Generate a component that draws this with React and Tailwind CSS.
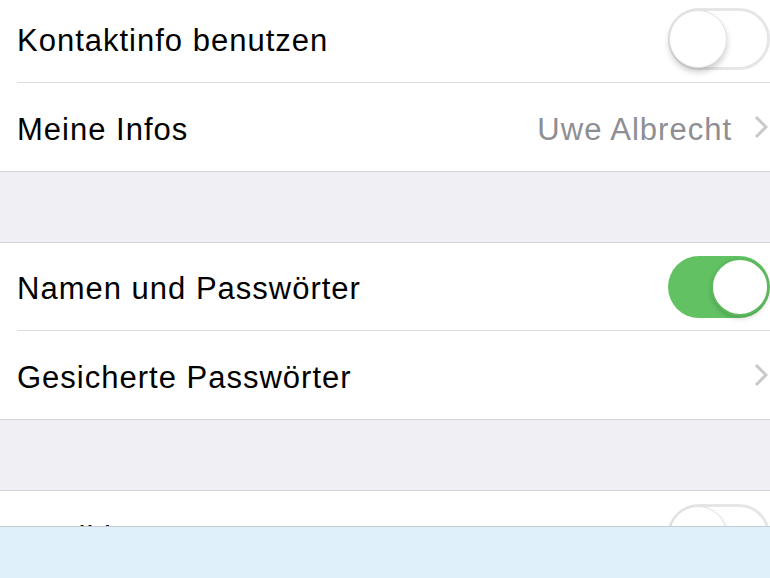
const Toggle = ({ on }) => {
  if (on) {
    return (
      <div className="relative h-[62px] w-[102px] shrink-0 rounded-full bg-[#62c162]">
        <div className="absolute right-[1px] top-[2px] h-[58px] w-[58px] rounded-full border-2 border-[#5cb95d] bg-white shadow-[0_3px_4px_rgba(0,0,0,0.15)]" />
      </div>
    );
  }
  return (
    <div className="relative h-[62px] w-[102px] shrink-0 rounded-full border-[3px] border-[#e6e6e9] bg-white">
      <div className="absolute left-[-2px] top-[-1px] h-[58px] w-[58px] rounded-full border border-[#e2e2e4] bg-white shadow-[0_4px_6px_rgba(0,0,0,0.2)]" />
    </div>
  );
};

const Chevron = () => (
  <svg width="14" height="24" viewBox="0 0 14 24" className="shrink-0">
    <path d="M2 2 L12 12 L2 22" fill="none" stroke="#c7c7cc" strokeWidth="3" />
  </svg>
);

const Row = ({ label, height, divider, children }) => (
  <div className={`flex pl-[17px] ${height} bg-white`}>
    <div
      className={`flex flex-1 items-center justify-between ${
        divider ? "border-b border-[#dcdcdf]" : ""
      }`}
    >
      <span className="pt-[6px] text-[31px] tracking-[1px] text-black">{label}</span>
      {children}
    </div>
  </div>
);

export default function App() {
  return (
    <div
      className="relative h-[578px] w-[770px] overflow-hidden bg-[#efeff4]"
      style={{ fontFamily: '"Liberation Sans", Arial, sans-serif' }}
    >
      <div className="mt-[-5px] flex flex-col">
        <div className="border-b border-[#d2d2d6] bg-white">
          <Row label="Kontaktinfo benutzen" height="h-[88px]" divider>
            <Toggle />
          </Row>
          <Row label="Meine Infos" height="h-[88px]">
            <div className="flex items-center gap-[22px] pr-[2px]">
              <span className="pt-[6px] text-[31px] tracking-[1px] text-[#8e8e93]">Uwe Albrecht</span>
              <Chevron />
            </div>
          </Row>
        </div>

        <div className="h-[70px]" />

        <div className="border-y border-[#d2d2d6] bg-white">
          <Row label="Namen und Passwörter" height="h-[88px]" divider>
            <Toggle on />
          </Row>
          <Row label="Gesicherte Passwörter" height="h-[88px]">
            <div className="pr-[2px]">
              <Chevron />
            </div>
          </Row>
        </div>

        <div className="h-[70px]" />

        <div className="border-t border-[#d2d2d6] bg-white">
          <Row label="Kreditkarten" height="h-[88px]">
            <Toggle />
          </Row>
        </div>
      </div>

      <div className="absolute bottom-0 left-0 h-[52px] w-full border-t border-[#c3ccd3] bg-[#dff0fb]" />
    </div>
  );
}
